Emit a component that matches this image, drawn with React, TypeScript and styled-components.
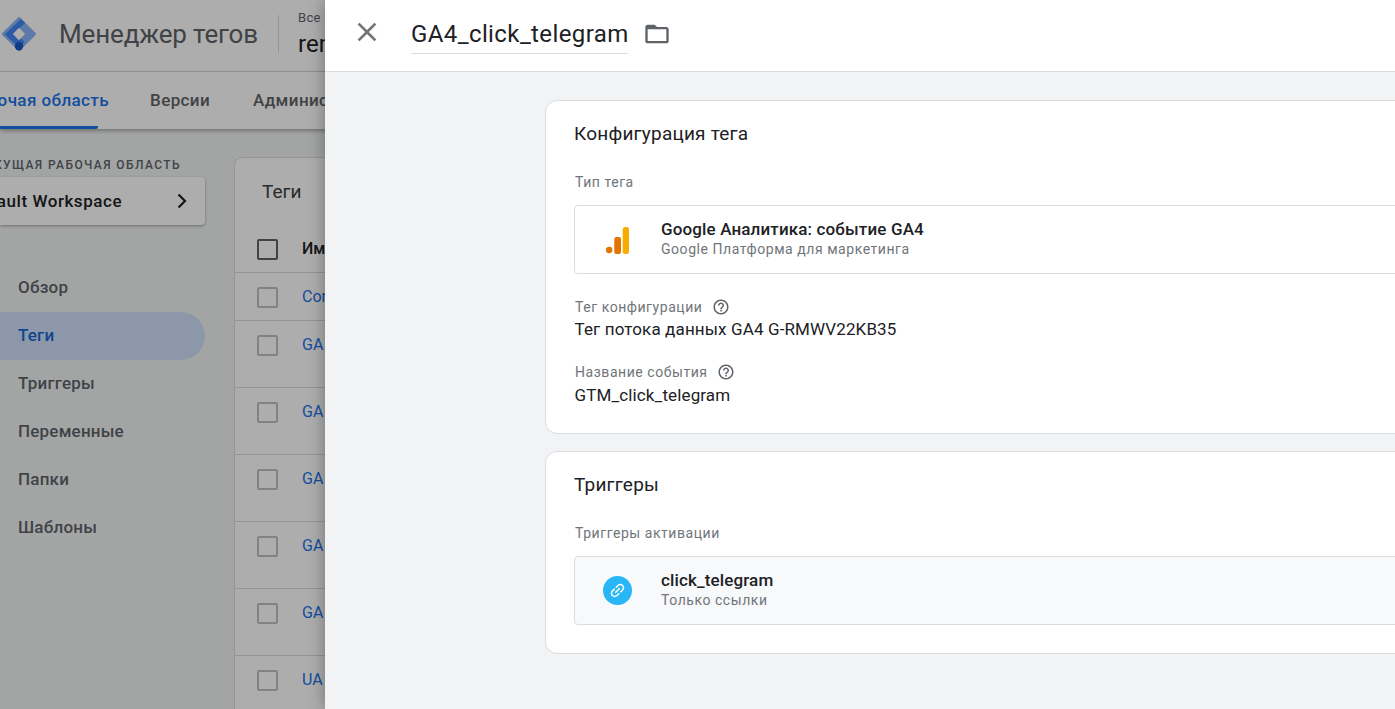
import styled, { createGlobalStyle } from 'styled-components';

const GlobalStyle = createGlobalStyle`
  html, body {
    margin: 0;
    padding: 0;
    height: 100%;
    overflow: hidden;
    font-family: 'Roboto', 'Liberation Sans', sans-serif;
  }
  * {
    box-sizing: border-box;
  }
`;

const Page = styled.div`
  position: relative;
  width: 100vw;
  height: 100vh;
  overflow: hidden;
  background: #f1f3f4;
`;

const AppHeader = styled.header`
  display: flex;
  align-items: center;
  height: 72px;
  padding: 0 0 4px 2px;
  background: #fff;
  border-bottom: 1px solid #dadce0;
`;

const AppTitle = styled.div`
  margin-left: 23px;
  font-size: 26px;
  letter-spacing: -0.15px;
  color: #5f6368;
  white-space: nowrap;
`;

const HeaderDivider = styled.div`
  width: 1px;
  height: 38px;
  margin: 0 19px 0 20px;
  background: #dadce0;
`;

const Account = styled.div`
  display: flex;
  flex-direction: column;
  gap: 5px;
`;

const AccountLabel = styled.div`
  font-size: 13px;
  line-height: 15px;
  letter-spacing: 0.3px;
  color: #5f6368;
`;

const AccountName = styled.div`
  font-size: 24px;
  line-height: 28px;
  color: #202124;
`;

const TabBar = styled.nav`
  display: flex;
  height: 57px;
  background: #fff;
  box-shadow: 0 2px 4px rgba(0, 0, 0, 0.3);
  position: relative;
`;

const Tab = styled.div<{ $active?: boolean; $width?: number }>`
  display: flex;
  align-items: center;
  justify-content: ${(p) => (p.$active ? 'flex-end' : 'flex-start')};
  width: ${(p) => (p.$width ? `${p.$width}px` : 'auto')};
  margin-right: ${(p) => (p.$active ? '52px' : '43px')};
  padding-top: 1px;
  font-size: 17px;
  font-weight: 500;
  letter-spacing: 0.4px;
  white-space: nowrap;
  color: ${(p) => (p.$active ? '#1a73e8' : '#5f6368')};
  border-bottom: 3px solid ${(p) => (p.$active ? '#1a73e8' : 'transparent')};
  border-bottom-right-radius: 2px;
`;

const ActiveTabText = styled.span`
  margin-right: -11px;
`;

const Workspace = styled.div`
  display: flex;
  height: 580px;
`;

const Sidebar = styled.aside`
  width: 234px;
  flex-shrink: 0;
  padding-top: 28px;
`;

const SidebarCaption = styled.div`
  display: flex;
  justify-content: flex-end;
  width: 181px;
  font-size: 12px;
  line-height: 16px;
  font-weight: 500;
  letter-spacing: 1.4px;
  color: #5f6368;
  white-space: nowrap;
`;

const WorkspaceButton = styled.div`
  display: flex;
  align-items: center;
  justify-content: space-between;
  width: 205px;
  height: 48px;
  margin-top: 4px;
  padding-right: 17px;
  background: #fff;
  border-radius: 0 4px 4px 0;
  box-shadow: 0 1px 3px rgba(0, 0, 0, 0.35);
  font-size: 17px;
  font-weight: 500;
  letter-spacing: 0.55px;
  color: #202124;
  white-space: nowrap;
`;

const WorkspaceName = styled.span`
  margin-left: -31px;
`;

const NavList = styled.div`
  display: flex;
  flex-direction: column;
  margin-top: 39px;
`;

const NavItem = styled.div<{ $active?: boolean }>`
  display: flex;
  align-items: center;
  width: 205px;
  height: 48px;
  padding: 0 0 2px 18px;
  border-radius: 0 24px 24px 0;
  font-size: 17px;
  font-weight: 500;
  letter-spacing: 0.2px;
  color: ${(p) => (p.$active ? '#1967d2' : '#5f6368')};
  background: ${(p) => (p.$active ? '#cfe0fb' : 'transparent')};
`;

const TableCard = styled.section`
  flex: 1;
  margin-top: 28px;
  background: #fff;
  border: 1px solid #dadce0;
  border-bottom: 0;
  border-top-left-radius: 8px;
`;

const TableTitle = styled.div`
  height: 67px;
  padding: 22px 0 0 27px;
  font-size: 19px;
  line-height: 24px;
  color: #3c4043;
`;

const TableRow = styled.div<{ $height: number }>`
  display: flex;
  align-items: flex-start;
  height: ${(p) => p.$height}px;
  padding: 14px 0 0 22px;
  border-bottom: 1px solid #dadce0;
`;

const Checkbox = styled.div<{ $strong?: boolean }>`
  width: 21px;
  height: 21px;
  border: 2px solid ${(p) => (p.$strong ? '#5f6368' : '#bdc1c6')};
  border-radius: 2px;
`;

const RowName = styled.div<{ $head?: boolean }>`
  margin-left: 24px;
  font-size: 16px;
  line-height: 20px;
  font-weight: ${(p) => (p.$head ? 500 : 400)};
  color: ${(p) => (p.$head ? '#202124' : '#1a73e8')};
`;

const Backdrop = styled.div`
  position: absolute;
  inset: 0;
  background: rgba(0, 0, 0, 0.32);
`;

const Panel = styled.div`
  position: absolute;
  top: 0;
  bottom: 0;
  left: 325px;
  right: 0;
  overflow: hidden;
  background: #f1f3f4;
  box-shadow: 0 0 16px rgba(0, 0, 0, 0.35);
`;

const PanelHeader = styled.div`
  display: flex;
  align-items: center;
  height: 72px;
  background: #fff;
  border-bottom: 1px solid #dadce0;
`;

const CloseButton = styled.div`
  display: flex;
  margin: 0 11px 7px 26px;
  color: #70757a;
`;

const TagName = styled.div`
  width: 217px;
  height: 40px;
  margin: -3px 0 0 17px;
  border-bottom: 1px solid #dadce0;
  font-size: 24px;
  line-height: 40px;
  letter-spacing: 0.4px;
  color: #202124;
  white-space: nowrap;
`;

const FolderButton = styled.div`
  display: flex;
  margin: 0 0 3px 15px;
  color: #5f6368;
`;

const PanelBody = styled.div`
  display: flex;
  flex-direction: column;
  gap: 17px;
  padding: 28px 0 0 220px;
`;

const Card = styled.section<{ $height: number }>`
  width: 1100px;
  height: ${(p) => p.$height}px;
  padding: 21px 0 0 29px;
  background: #fff;
  border: 1px solid #dadce0;
  border-radius: 12px;
`;

const CardTitle = styled.h2`
  margin: 0 0 0 -1px;
  font-size: 19px;
  line-height: 24px;
  font-weight: 400;
  letter-spacing: 0.22px;
  color: #202124;
`;

const FieldLabel = styled.div<{ $top: number }>`
  display: flex;
  align-items: center;
  gap: 9.5px;
  height: 20px;
  margin-top: ${(p) => p.$top}px;
  font-size: 14px;
  letter-spacing: 0.55px;
  color: #70757a;
`;

const FieldValue = styled.div<{ $top: number }>`
  margin: ${(p) => p.$top}px 0 0 -0.5px;
  font-size: 17px;
  line-height: 22px;
  letter-spacing: 0.13px;
  color: #202124;
`;

const EntityBox = styled.div<{ $tinted?: boolean }>`
  display: flex;
  align-items: center;
  height: 69px;
  margin: 13px 0 0 -1px;
  background: ${(p) => (p.$tinted ? '#f8f9fa' : '#fff')};
  border: 1px solid #dadce0;
  border-radius: 4px;
`;

const EntityIcon = styled.div`
  display: flex;
  justify-content: center;
  width: 86px;
  padding-right: 2px;
  flex-shrink: 0;
`;

const EntityText = styled.div`
  padding-bottom: 1px;
`;

const EntityTitle = styled.div`
  font-size: 17px;
  line-height: 20px;
  font-weight: 500;
  letter-spacing: 0.14px;
  color: #202124;
`;

const EntitySub = styled.div`
  font-size: 14px;
  line-height: 20px;
  letter-spacing: 0.55px;
  color: #70757a;
`;

const LinkBadge = styled.div`
  display: flex;
  align-items: center;
  justify-content: center;
  width: 29px;
  height: 29px;
  border-radius: 50%;
  background: #29b6f6;
  color: #fff;
`;

const GtmLogo = () => (
  <svg width="34" height="34" viewBox="0 0 36 36">
    <path d="M18 1.5 34.5 18 18 34.5 1.5 18Z" fill="#8ab4f8" stroke="#8ab4f8" strokeWidth="3" strokeLinejoin="round" />
    <path d="M20 2 3 18.2 11.5 26.5 16 22l-4-4L24.5 6.3Z" fill="#4285f4" />
    <path d="M11.5 26 18 32.5l6-6-6.5-6.5Z" fill="#4285f4" />
    <rect x="13.4" y="13.4" width="9.2" height="9.2" transform="rotate(45 18 18)" fill="#fff" />
    <circle cx="18" cy="31" r="4.4" fill="#1a56c4" />
  </svg>
);

const CloseIcon = () => (
  <svg width="32" height="32" viewBox="0 0 24 24" fill="currentColor">
    <path d="M19 6.41 17.59 5 12 10.59 6.41 5 5 6.41 10.59 12 5 17.59 6.41 19 12 13.41 17.59 19 19 17.59 13.41 12z" />
  </svg>
);

const FolderIcon = () => (
  <svg width="28" height="28" viewBox="0 0 24 24" fill="currentColor">
    <path d="M20 6h-8l-2-2H4c-1.1 0-1.99.9-1.99 2L2 18c0 1.1.9 2 2 2h16c1.1 0 2-.9 2-2V8c0-1.1-.9-2-2-2zm0 12H4V8h16v10z" />
  </svg>
);

const HelpIcon = () => (
  <svg width="18" height="18" viewBox="0 0 24 24" fill="#5f6368">
    <path d="M11 18h2v-2h-2v2zm1-16C6.48 2 2 6.48 2 12s4.48 10 10 10 10-4.48 10-10S17.52 2 12 2zm0 18c-4.41 0-8-3.59-8-8s3.59-8 8-8 8 3.59 8 8-3.59 8-8 8zm0-14c-2.21 0-4 1.79-4 4h2c0-1.1.9-2 2-2s2 .9 2 2c0 2-3 1.75-3 5h2c0-2.25 3-2.5 3-5 0-2.21-1.79-4-4-4z" />
  </svg>
);

const ChevronIcon = () => (
  <svg width="12" height="16" viewBox="0 0 12 16" fill="none" stroke="#202124" strokeWidth="2.2">
    <path d="M2.5 1.5 9 8l-6.5 6.5" />
  </svg>
);

const AnalyticsIcon = () => (
  <svg width="24" height="28" viewBox="0 0 24 28">
    <circle cx="4.2" cy="24" r="3.2" fill="#e37400" />
    <rect x="9.3" y="11" width="6.7" height="17" rx="2" fill="#e37400" />
    <rect x="17.7" y="1" width="6.3" height="27" rx="2.5" fill="#f9ab00" />
  </svg>
);

const LinkIcon = () => (
  <svg width="19" height="19" viewBox="0 0 24 24" fill="currentColor" transform="rotate(-45)">
    <path d="M3.9 12c0-1.71 1.39-3.1 3.1-3.1h4V7H7c-2.76 0-5 2.24-5 5s2.24 5 5 5h4v-1.9H7c-1.71 0-3.1-1.39-3.1-3.1zM8 13h8v-2H8v2zm9-6h-4v1.9h4c1.71 0 3.1 1.39 3.1 3.1s-1.39 3.1-3.1 3.1h-4V17h4c2.76 0 5-2.24 5-5s-2.24-5-5-5z" />
  </svg>
);

const rows = [
  { name: 'Cor', height: 48 },
  { name: 'GA', height: 67 },
  { name: 'GA', height: 67 },
  { name: 'GA', height: 67 },
  { name: 'GA', height: 67 },
  { name: 'GA', height: 67 },
  { name: 'UA', height: 67 },
];

const navItems = ['Обзор', 'Теги', 'Триггеры', 'Переменные', 'Папки', 'Шаблоны'];

const App = () => (
  <Page>
    <GlobalStyle />
    <AppHeader>
      <GtmLogo />
      <AppTitle>Менеджер тегов</AppTitle>
      <HeaderDivider />
      <Account>
        <AccountLabel>Все</AccountLabel>
        <AccountName>rem</AccountName>
      </Account>
    </AppHeader>
    <TabBar>
      <Tab $active $width={98}>
        <ActiveTabText>Рабочая область</ActiveTabText>
      </Tab>
      <Tab>Версии</Tab>
      <Tab>Администрирование</Tab>
    </TabBar>
    <Workspace>
      <Sidebar>
        <SidebarCaption>ТЕКУЩАЯ РАБОЧАЯ ОБЛАСТЬ</SidebarCaption>
        <WorkspaceButton>
          <WorkspaceName>Default Workspace</WorkspaceName>
          <ChevronIcon />
        </WorkspaceButton>
        <NavList>
          {navItems.map((item) => (
            <NavItem key={item} $active={item === 'Теги'}>
              {item}
            </NavItem>
          ))}
        </NavList>
      </Sidebar>
      <TableCard>
        <TableTitle>Теги</TableTitle>
        <TableRow $height={48}>
          <Checkbox $strong />
          <RowName $head>Имя</RowName>
        </TableRow>
        {rows.map((row, i) => (
          <TableRow key={i} $height={row.height}>
            <Checkbox />
            <RowName>{row.name}</RowName>
          </TableRow>
        ))}
      </TableCard>
    </Workspace>
    <Backdrop />
    <Panel>
      <PanelHeader>
        <CloseButton>
          <CloseIcon />
        </CloseButton>
        <TagName>GA4_click_telegram</TagName>
        <FolderButton>
          <FolderIcon />
        </FolderButton>
      </PanelHeader>
      <PanelBody>
        <Card $height={334}>
          <CardTitle>Конфигурация тега</CardTitle>
          <FieldLabel $top={26}>Тип тега</FieldLabel>
          <EntityBox>
            <EntityIcon>
              <AnalyticsIcon />
            </EntityIcon>
            <EntityText>
              <EntityTitle>Google Аналитика: событие GA4</EntityTitle>
              <EntitySub>Google Платформа для маркетинга</EntitySub>
            </EntityText>
          </EntityBox>
          <FieldLabel $top={23}>
            Тег конфигурации <HelpIcon />
          </FieldLabel>
          <FieldValue $top={1}>Тег потока данных GA4 G-RMWV22KB35</FieldValue>
          <FieldLabel $top={22}>
            Название события <HelpIcon />
          </FieldLabel>
          <FieldValue $top={2}>GTM_click_telegram</FieldValue>
        </Card>
        <Card $height={203}>
          <CardTitle>Триггеры</CardTitle>
          <FieldLabel $top={26}>Триггеры активации</FieldLabel>
          <EntityBox $tinted>
            <EntityIcon>
              <LinkBadge>
                <LinkIcon />
              </LinkBadge>
            </EntityIcon>
            <EntityText>
              <EntityTitle>click_telegram</EntityTitle>
              <EntitySub>Только ссылки</EntitySub>
            </EntityText>
          </EntityBox>
        </Card>
      </PanelBody>
    </Panel>
  </Page>
);

export default App;
